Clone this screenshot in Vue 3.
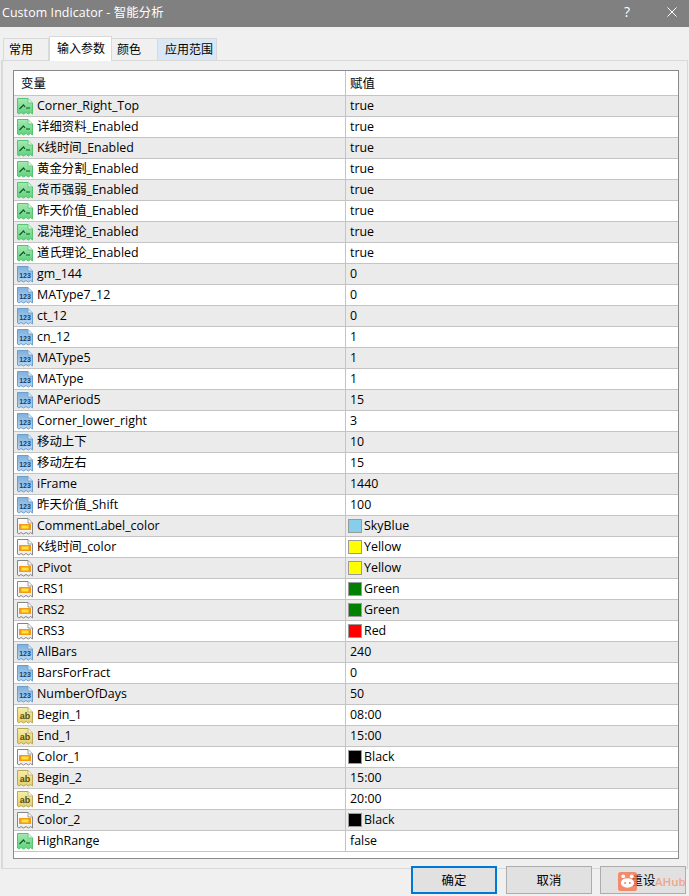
<script setup>
const raw = [
  ['b','Corner_Right_Top','true'],['b','详细资料_Enabled','true'],['b','K线时间_Enabled','true'],['b','黄金分割_Enabled','true'],
  ['b','货币强弱_Enabled','true'],['b','昨天价值_Enabled','true'],['b','混沌理论_Enabled','true'],['b','道氏理论_Enabled','true'],
  ['n','gm_144','0'],['n','MAType7_12','0'],['n','ct_12','0'],['n','cn_12','1'],['n','MAType5','1'],['n','MAType','1'],
  ['n','MAPeriod5','15'],['n','Corner_lower_right','3'],['n','移动上下','10'],['n','移动左右','15'],['n','iFrame','1440'],['n','昨天价值_Shift','100'],
  ['c','CommentLabel_color','SkyBlue','#87ceeb'],['c','K线时间_color','Yellow','#ffff00'],['c','cPivot','Yellow','#ffff00'],
  ['c','cRS1','Green','#008000'],['c','cRS2','Green','#008000'],['c','cRS3','Red','#ff0000'],
  ['n','AllBars','240'],['n','BarsForFract','0'],['n','NumberOfDays','50'],
  ['s','Begin_1','08:00'],['s','End_1','15:00'],['c','Color_1','Black','#000000'],['s','Begin_2','15:00'],['s','End_2','20:00'],['c','Color_2','Black','#000000'],
  ['b','HighRange','false']
]
const rows = raw.map(([kind, name, value, swatch]) => ({ kind, name, value, swatch }))
const stroke = { b: '#58c274', n: '#6c9ecb', c: '#858585', s: '#b9a85a' }
const sheet = 'M0.5 0.5H11L15.5 5V16L13.5 14.5L11.5 16L9 14.5L6.5 16L4 14.5L2 16L0.5 15Z'
</script>

<template>
  <div class="dialog">
    <svg class="defs" width="0" height="0" aria-hidden="true">
      <defs>
        <linearGradient id="grad-b" x1="0" y1="0" x2="0" y2="1"><stop offset="0" stop-color="#a4eab2"/><stop offset="1" stop-color="#5fd27c"/></linearGradient>
        <linearGradient id="grad-n" x1="0" y1="0" x2="0" y2="1"><stop offset="0" stop-color="#7fb0dd"/><stop offset="1" stop-color="#b9d6f1"/></linearGradient>
        <linearGradient id="grad-c" x1="0" y1="0" x2="0" y2="1"><stop offset="0" stop-color="#ffffff"/><stop offset="1" stop-color="#ececec"/></linearGradient>
        <linearGradient id="grad-s" x1="0" y1="0" x2="0" y2="1"><stop offset="0" stop-color="#f6eea8"/><stop offset="1" stop-color="#e3cf6e"/></linearGradient>
      </defs>
    </svg>
    <header class="titlebar">
      <span class="title">Custom Indicator - 智能分析</span>
      <span class="help">?</span>
      <svg class="close" width="10" height="10" viewBox="0 0 10 10"><path d="M0.5 0.5L9.5 9.5M9.5 0.5L0.5 9.5" stroke="#fff" stroke-width="1" fill="none"/></svg>
    </header>
    <nav class="tabs">
      <span class="tab first">常用</span>
      <span class="tab active">输入参数</span>
      <span class="tab">颜色</span>
      <span class="tab hover">应用范围</span>
    </nav>
    <section class="panel">
      <div class="table">
        <div class="head">
          <div class="c1">变量</div>
          <div class="c2">赋值</div>
        </div>
        <div v-for="(r, i) in rows" :key="i" class="row" :class="{ odd: i % 2 === 0 }">
          <div class="c1">
            <svg class="ico" width="16" height="17" viewBox="0 0 16 17">
              <path :d="sheet" :fill="`url(#grad-${r.kind})`" :stroke="stroke[r.kind]" stroke-width="1"/>
              <path d="M11 0.5V5H15.5" fill="#ffffffb0" :stroke="stroke[r.kind]" stroke-width="0.8"/>
              <path v-if="r.kind === 'b'" d="M2.5 11L6.5 7L8 9M9 10H13" fill="none" stroke="#14532d" stroke-width="1.2"/>
              <template v-if="r.kind === 'c'">
                <rect x="2" y="6" width="12" height="6" fill="#f59a16"/>
                <rect x="4.5" y="7.5" width="7" height="3" fill="#ffe23a"/>
              </template>
              <text v-if="r.kind === 'n'" x="8" y="12" class="glyph n">123</text>
              <text v-if="r.kind === 's'" x="8" y="12" class="glyph s">ab</text>
            </svg>
            <span class="txt">{{ r.name }}</span>
          </div>
          <div class="c2">
            <i v-if="r.swatch" class="swatch" :style="{ background: r.swatch }"></i>
            <span class="txt">{{ r.value }}</span>
          </div>
        </div>
        <div class="rest"></div>
      </div>
    </section>
    <footer class="actions">
      <button class="btn primary">确定</button>
      <button class="btn">取消</button>
      <button class="btn">重设</button>
    </footer>
    <div class="mark">
      <svg width="19" height="19" viewBox="0 0 20 20">
        <rect width="20" height="20" rx="3" fill="#f4764d" opacity="0.8"/>
        <circle cx="5.5" cy="4.5" r="2" fill="#fff"/><circle cx="14.5" cy="4.5" r="2" fill="#fff"/>
        <ellipse cx="10" cy="11.5" rx="7" ry="5" fill="#fff"/>
        <circle cx="7.5" cy="11.5" r="1" fill="#f4764d"/><circle cx="12.5" cy="11.5" r="1" fill="#f4764d"/>
      </svg>
      <span>AHub</span>
    </div>
  </div>
</template>

<style scoped>
.dialog {
  position: relative;
  width: 689px;
  height: 896px;
  overflow: hidden;
  background: #f0f0f0;
  display: flex;
  flex-direction: column;
  font-family: "Open Sans", "Noto Sans CJK SC", sans-serif;
  font-size: 12.4px;
  color: #000;
}
.defs { position: absolute; }
.titlebar {
  height: 27px;
  flex: none;
  box-sizing: border-box;
  background: #808080;
  color: #fff;
  display: flex;
  align-items: center;
  padding: 0 12px 4px 2px;
}
.title { flex: 1; letter-spacing: 0.1px; }
.help { margin-right: 37px; font-size: 14px; }
.tabs {
  height: 25px;
  margin-top: 8px;
  padding-left: 3px;
  display: flex;
  align-items: flex-end;
  flex: none;
  font-size: 12px;
}
.tab {
  height: 22px;
  width: 46px;
  box-sizing: border-box;
  border: 1px solid #d9d9d9;
  border-bottom: 0;
  border-left: 0;
  display: flex;
  align-items: center;
  padding: 0 0 1px 5px;
}
.tab.first { border-left: 1px solid #d9d9d9; }
.tab.active {
  width: 63px;
  height: 25px;
  background: #fff;
  position: relative;
  top: 1px;
  border-left: 1px solid #d9d9d9;
  padding: 0 0 3px 7px;
}
.tab.hover { width: 59px; background: #d8e8f6; padding-left: 7px; }
.panel {
  flex: 1;
  margin: 0 1px 0 1px;
  border: 1px solid #d9d9d9;
  border-width: 1px 1px 1px 2px;
  padding: 9px 8px 9px 10px;
  min-height: 0;
  display: flex;
}
.table {
  flex: 1;
  border: 1px solid #8a8a8e;
  background: #fff;
  display: flex;
  flex-direction: column;
}
.head, .row { display: flex; flex: none; border-bottom: 1px solid #c4c4c4; box-sizing: border-box; }
.head { height: 25px; }
.row { height: 21px; }
.row.odd { background: #ebebeb; }
.c1, .c2 { display: flex; align-items: center; white-space: nowrap; box-sizing: border-box; }
.c1 { width: 332px; flex: none; border-right: 1px solid #c4c4c4; }
.c2 { flex: 1; padding-left: 4px; }
.head .c1 { padding-left: 7px; }
.head .c2 { padding-left: 4px; }
.txt { padding-bottom: 2px; }
.ico { margin: 0 4px 0 3px; flex: none; }
.glyph { font-size: 7px; font-weight: 700; text-anchor: middle; font-family: "Liberation Sans", sans-serif; }
.glyph.n { fill: #12406e; }
.glyph.s { fill: #5a4c0a; font-size: 9px; }
.swatch {
  width: 14px;
  height: 14px;
  box-sizing: border-box;
  border: 1px solid #9a9a9a;
  margin: 0 2px 0 -2px;
  flex: none;
}
.rest { flex: 1; }
.actions {
  position: relative;
  margin-top: -3px;
  height: 29px;
  padding: 0 3px 1px 411px;
  display: flex;
  gap: 8px;
  flex: none;
}
.btn {
  width: 86px;
  height: 28px;
  box-sizing: border-box;
  background: #e1e1e1;
  border: 1px solid #adadad;
  font: inherit;
  padding: 0;
}
.btn.primary { border: 2px solid #0078d7; margin-right: 1px; }
.mark {
  position: absolute;
  left: 618px;
  top: 872px;
  display: flex;
  align-items: center;
  gap: 18px;
  color: #f0a58c;
  font-size: 11.5px;
  font-weight: 600;
}
</style>
